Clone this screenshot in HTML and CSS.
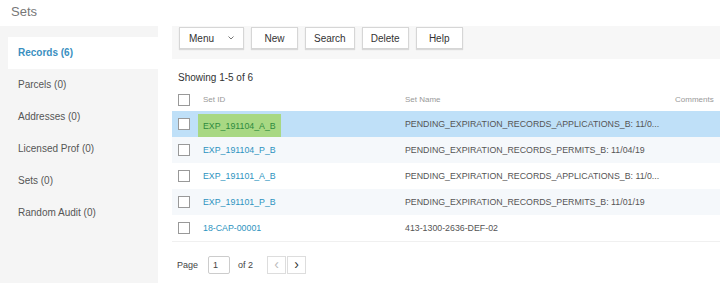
FILE: index.html
```html
<!DOCTYPE html>
<html lang="en">
<head>
  <meta charset="UTF-8">
  <title>Sets</title>
  <link rel="stylesheet" href="styles.css">
</head>
<body>

  <div class="title">Sets</div>

  <div class="layout">
    <div class="side">
      <div class="tab active">Records (6)</div>
      <div class="tab">Parcels (0)</div>
      <div class="tab">Addresses (0)</div>
      <div class="tab">Licensed Prof (0)</div>
      <div class="tab">Sets (0)</div>
      <div class="tab">Random Audit (0)</div>
    </div>

    <div class="main">
      <div class="toolbar">
        <button class="btn menu-btn">Menu
          <svg class="caret" width="6" height="4" viewBox="0 0 6 4"><path d="M0.5 0.5 L3 3 L5.5 0.5" fill="none" stroke="#777" stroke-width="1"/></svg>
        </button>
        <button class="btn">New</button>
        <button class="btn">Search</button>
        <button class="btn">Delete</button>
        <button class="btn">Help</button>
      </div>

      <div class="showing">Showing 1-5 of 6</div>

      <div class="row head">
        <span class="cb"></span>
        <span class="c-id">Set ID</span>
        <span class="c-name">Set Name</span>
        <span class="c-com">Comments</span>
      </div>
      <div class="row selected">
        <span class="cb"></span>
        <span class="c-id"><span class="hit">EXP_191104_A_B</span></span>
        <span class="c-name">PENDING_EXPIRATION_RECORDS_APPLICATIONS_B: 11/0...</span>
        <span class="c-com"></span>
      </div>
      <div class="row alt">
        <span class="cb"></span>
        <span class="c-id"><a>EXP_191104_P_B</a></span>
        <span class="c-name">PENDING_EXPIRATION_RECORDS_PERMITS_B: 11/04/19</span>
        <span class="c-com"></span>
      </div>
      <div class="row">
        <span class="cb"></span>
        <span class="c-id"><a>EXP_191101_A_B</a></span>
        <span class="c-name">PENDING_EXPIRATION_RECORDS_APPLICATIONS_B: 11/0...</span>
        <span class="c-com"></span>
      </div>
      <div class="row alt">
        <span class="cb"></span>
        <span class="c-id"><a>EXP_191101_P_B</a></span>
        <span class="c-name">PENDING_EXPIRATION_RECORDS_PERMITS_B: 11/01/19</span>
        <span class="c-com"></span>
      </div>
      <div class="row last">
        <span class="cb"></span>
        <span class="c-id"><a>18-CAP-00001</a></span>
        <span class="c-name">413-1300-2636-DEF-02</span>
        <span class="c-com"></span>
      </div>

      <div class="pager">
        <span>Page</span>
        <span class="page-input">1</span>
        <span>of 2</span>
        <span class="arrows">
          <span class="arrow off">&lsaquo;</span>
          <span class="arrow">&rsaquo;</span>
        </span>
      </div>
    </div>
  </div>

</body>
</html>
```

FILE: styles.css
```css
body {
  margin: 0;
  font-family: 'Liberation Sans', Arial, sans-serif;
  background-color: #f5f5f5;
  color: #444;
  height: 283px;
  overflow: hidden;
}
.title {
  background-color: #fff;
  height: 26px;
  line-height: 24px;
  padding-left: 11px;
  font-size: 13px;
  color: #777;
}
.layout {
  display: flex;
  height: 257px;
}
.side {
  width: 150px;
  padding: 11px 0 0 8px;
}
.tab {
  height: 32px;
  line-height: 31px;
  padding-left: 10px;
  font-size: 10px;
  color: #555;
}
.tab.active {
  background-color: #fff;
  color: #3a8fbf;
  font-weight: bold;
}
.main {
  flex: 1;
  background-color: #fff;
  padding-left: 14px;
}
.toolbar {
  background-color: #f7f7f7;
  height: 33px;
  padding: 1px 0 0 7px;
  box-sizing: border-box;
  display: flex;
  align-items: flex-start;
  gap: 7px;
}
.btn {
  height: 22px;
  min-width: 47px;
  padding: 0 8px;
  background-color: #fff;
  border: 1px solid #d6d6d6;
  box-shadow: 0 1px 1px rgba(0, 0, 0, 0.12);
  font-family: 'Liberation Sans', Arial, sans-serif;
  font-size: 10px;
  color: #333;
  white-space: nowrap;
}
.menu-btn {
  width: 65px;
  display: flex;
  align-items: center;
  justify-content: space-between;
  padding: 0 9px 0 9px;
}
.caret {
  display: block;
}
.showing {
  font-size: 10px;
  color: #333;
  padding: 13px 0 0 6px;
  height: 18px;
}
.row {
  display: flex;
  align-items: center;
  height: 26px;
  font-size: 8.8px;
  color: #555;
}
.row.head {
  height: 19px;
  font-size: 8px;
  color: #999;
  padding-bottom: 2px;
}
.row.selected {
  background-color: #bfe0f8;
}
.row.alt {
  background-color: #f5f8fb;
}
.row.last {
  border-bottom: 1px solid #f0f0f0;
}
.cb {
  width: 10px;
  height: 10px;
  border: 1px solid #999;
  background-color: #fff;
  margin: 0 13px 0 6px;
  flex-shrink: 0;
}
.c-id {
  width: 202px;
  align-self: stretch;
  display: flex;
  align-items: center;
}
.head .c-id, .head .c-name, .head .c-com {
  align-self: center;
}
.c-id a {
  color: #2d93c0;
}
.hit {
  background-color: #a8d883;
  color: #2e8b3e;
  align-self: stretch;
  display: flex;
  align-items: center;
  margin: 3px 0 0 -5px;
  padding: 0 4px 0 5px;
  width: 74px;
}
.c-name {
  width: 270px;
}
.pager {
  display: flex;
  align-items: center;
  height: 18px;
  margin-top: 14px;
  padding-left: 5px;
  font-size: 9px;
  color: #444;
}
.page-input {
  width: 16px;
  height: 16px;
  line-height: 16px;
  border: 1px solid #ccc;
  border-radius: 2px;
  padding-left: 4px;
  margin: 0 8px 0 10px;
}
.arrows {
  display: flex;
  margin-left: 14px;
}
.arrow {
  width: 17px;
  height: 16px;
  line-height: 14px;
  border: 1px solid #ddd;
  text-align: center;
  font-size: 14px;
  color: #333;
  margin-right: 1px;
}
.arrow.off {
  color: #bbb;
}
```
